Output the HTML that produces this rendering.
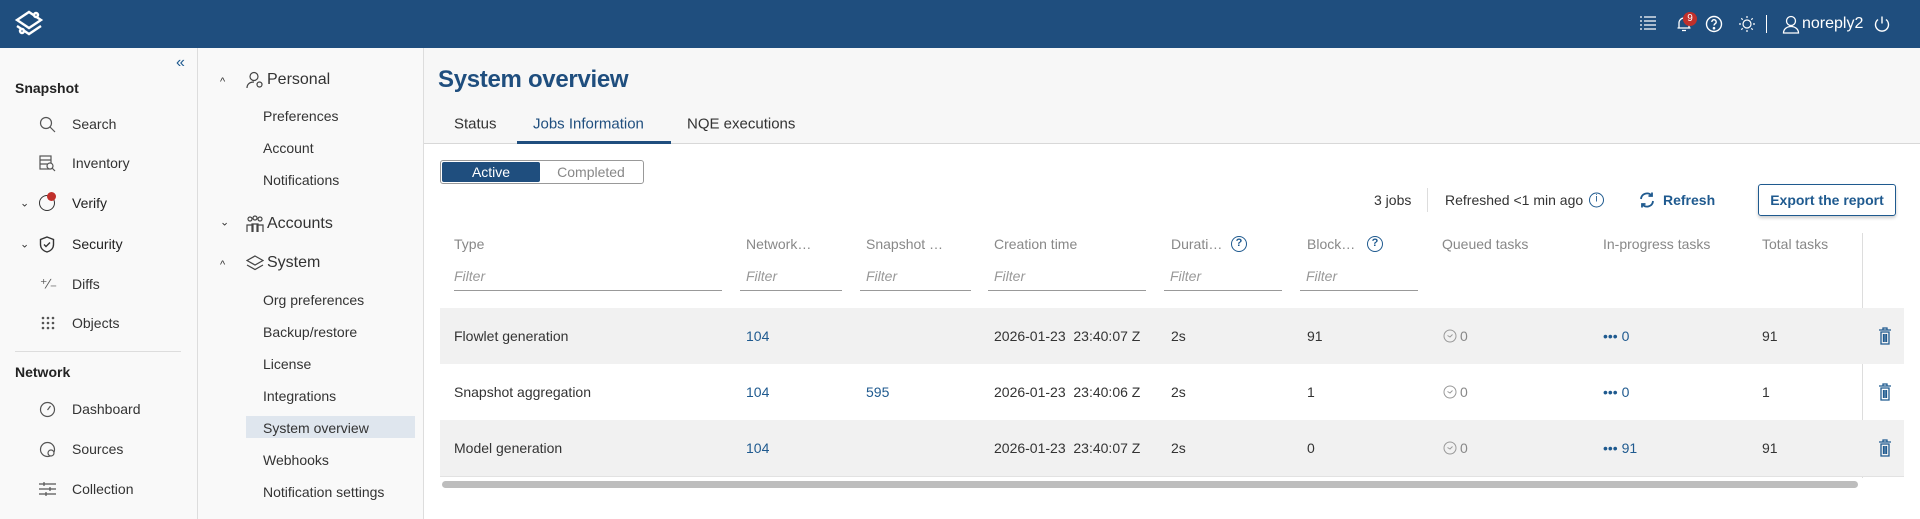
<!DOCTYPE html>
<html><head><meta charset="utf-8"><style>
*{box-sizing:border-box;margin:0;padding:0}
body{width:1920px;height:519px;overflow:hidden;font-family:"Liberation Sans",sans-serif;font-size:14px;color:#333;background:#fff;position:relative}
.a{position:absolute;white-space:nowrap}
.hdr{position:absolute;left:0;top:0;width:1920px;height:48px;background:#1f4e7e}
.sb1{position:absolute;left:0;top:48px;width:198px;height:471px;background:#f9f9f9;border-right:1px solid #ddd}
.sb2{position:absolute;left:198px;top:48px;width:226px;height:471px;background:#f9f9f9;border-right:1px solid #ddd}
.top{position:absolute;left:424px;top:48px;width:1496px;height:96px;background:#f7f7f7;border-bottom:1px solid #d8d8d8}
.t{transform:translateY(-50%)}
.blue{color:#1f5a8f}
.g{color:#888}
svg{position:absolute}
</style></head><body>
<div class="hdr"></div>
<svg style="left:14px;top:9px" width="30" height="30" viewBox="0 0 30 30" fill="none" stroke="#fff" stroke-width="2.4"><path d="M15 3 L27 11 L15 19 L3 11 Z"/><path d="M3 17 L15 25 L27 17"/><circle cx="22" cy="6" r="2" fill="#1f4e7e"/><circle cx="8" cy="22" r="2" fill="#1f4e7e"/></svg>
<svg style="left:1640px;top:16px" width="16" height="14" viewBox="0 0 16 14" fill="none" stroke="#fff" stroke-width="1.3"><path d="M0 1h2M0 5h2M0 9h2M0 13h2M4 1h12M4 5h12M4 9h12M4 13h12"/></svg>
<svg style="left:1675px;top:15px" width="18" height="18" viewBox="0 0 18 18" fill="none" stroke="#fff" stroke-width="1.3"><path d="M4 13V8a5 5 0 0110 0v5H2.5h13M7 15.5h4"/></svg>
<div class="a" style="left:1683px;top:12px;width:14px;height:14px;border-radius:7px;background:#c0302b;color:#fff;font-size:10px;text-align:center;line-height:14px">9</div>
<svg style="left:1705px;top:15px" width="18" height="18" viewBox="0 0 18 18" fill="none" stroke="#fff" stroke-width="1.4"><circle cx="9" cy="9" r="7.5"/><path d="M6.8 7a2.2 2.2 0 114 1.2c-.8.6-1.8 1-1.8 2.3"/><circle cx="9" cy="13.2" r=".6" fill="#fff"/></svg>
<svg style="left:1738px;top:15px" width="18" height="18" viewBox="0 0 18 18" fill="none" stroke="#fff" stroke-width="1.2"><circle cx="9" cy="9" r="4"/><path d="M9 1v2M9 15v2M1 9h2M15 9h2M3.3 3.3l1.4 1.4M13.3 13.3l1.4 1.4M3.3 14.7l1.4-1.4M13.3 4.7l1.4-1.4"/></svg>
<div class="a" style="left:1766px;top:15px;width:1px;height:18px;background:#fff"></div>
<svg style="left:1782px;top:14px" width="18" height="20" viewBox="0 0 18 20" fill="none" stroke="#fff" stroke-width="1.3"><circle cx="9" cy="7" r="4.5"/><path d="M1.5 19c0-4 3.5-6.5 7.5-6.5s7.5 2.5 7.5 6.5z"/></svg>
<div class="a" style="left:1802px;top:15px;color:#fff;font-size:16px">noreply2</div>
<svg style="left:1873px;top:15px" width="18" height="18" viewBox="0 0 18 18" fill="none" stroke="#fff" stroke-width="1.4"><path d="M5 4.5a6.5 6.5 0 108 0M9 1.5v7"/></svg>

<div class="sb1"></div>
<div class="a" style="left:176px;top:54px;color:#1f5a8f;font-size:16px">«</div>
<div class="a t" style="left:15px;top:88px;font-weight:bold;color:#222">Snapshot</div>
<svg style="left:39px;top:116px" width="17" height="17" viewBox="0 0 17 17" fill="none" stroke="#555" stroke-width="1.2"><circle cx="7" cy="7" r="5.5"/><path d="M11 11l5 5"/></svg>
<div class="a t" style="left:72px;top:124px">Search</div>
<svg style="left:39px;top:155px" width="17" height="17" viewBox="0 0 17 17" fill="none" stroke="#555" stroke-width="1.2"><rect x="1" y="1" width="11" height="13"/><path d="M1 5h11M1 9h11"/><circle cx="11" cy="11" r="3" fill="#f9f9f9"/><path d="M13 13l3 3"/></svg>
<div class="a t" style="left:72px;top:163px">Inventory</div>
<div class="a t" style="left:20px;top:203px;font-size:11px">⌄</div>
<div class="a t" style="left:39px;top:203px;width:16px;height:16px;border:1.5px solid #333;border-radius:8px"></div>
<div class="a" style="left:47px;top:192px;width:9px;height:9px;border-radius:5px;background:#c0302b"></div>
<div class="a t" style="left:72px;top:203px;color:#222">Verify</div>
<div class="a t" style="left:20px;top:244px;font-size:11px">⌄</div>
<svg style="left:39px;top:236px" width="16" height="17" viewBox="0 0 16 17" fill="none" stroke="#333" stroke-width="1.4"><path d="M8 1l6.5 2.5v5c0 4-3 6.5-6.5 7.5C4.5 15 1.5 12.5 1.5 8.5v-5z"/><path d="M5 8.5l2 2 4-4"/></svg>
<div class="a t" style="left:72px;top:244px;color:#222">Security</div>
<div class="a t" style="left:40px;top:284px;color:#555">⁺∕₋</div>
<div class="a t" style="left:72px;top:284px">Diffs</div>
<svg style="left:41px;top:316px" width="14" height="14" viewBox="0 0 14 14" fill="#555"><circle cx="2" cy="2" r="1.3"/><circle cx="7" cy="2" r="1.3"/><circle cx="12" cy="2" r="1.3"/><circle cx="2" cy="7" r="1.3"/><circle cx="7" cy="7" r="1.3"/><circle cx="12" cy="7" r="1.3"/><circle cx="2" cy="12" r="1.3"/><circle cx="7" cy="12" r="1.3"/><circle cx="12" cy="12" r="1.3"/></svg>
<div class="a t" style="left:72px;top:323px">Objects</div>
<div class="a" style="left:15px;top:351px;width:166px;height:1px;background:#ddd"></div>
<div class="a t" style="left:15px;top:372px;font-weight:bold;color:#222">Network</div>
<svg style="left:39px;top:401px" width="17" height="17" viewBox="0 0 17 17" fill="none" stroke="#555" stroke-width="1.2"><circle cx="8.5" cy="8.5" r="7"/><path d="M8.5 9l3-4"/></svg>
<div class="a t" style="left:72px;top:409px">Dashboard</div>
<svg style="left:39px;top:441px" width="17" height="17" viewBox="0 0 17 17" fill="none" stroke="#555" stroke-width="1.2"><circle cx="8.5" cy="8.5" r="7"/><circle cx="12" cy="12" r="3" fill="#f9f9f9"/></svg>
<div class="a t" style="left:72px;top:449px">Sources</div>
<svg style="left:39px;top:482px" width="17" height="14" viewBox="0 0 17 14" fill="none" stroke="#555" stroke-width="1.2"><path d="M0 2h17M0 7h17M0 12h17"/><path d="M5 0v4M11 5v4M7 10v4"/></svg>
<div class="a t" style="left:72px;top:489px">Collection</div>

<div class="sb2"></div>
<div class="a t" style="left:220px;top:82px;font-size:11px">^</div>
<svg style="left:246px;top:71px" width="18" height="18" viewBox="0 0 18 18" fill="none" stroke="#444" stroke-width="1.2"><circle cx="8" cy="5.5" r="4"/><path d="M1 17c0-4 3-6 7-6"/><circle cx="13.5" cy="13.5" r="2.5"/></svg>
<div class="a t" style="left:267px;top:80px;font-size:16px;color:#333">Personal</div>
<div class="a t" style="left:263px;top:116px">Preferences</div>
<div class="a t" style="left:263px;top:148px">Account</div>
<div class="a t" style="left:263px;top:180px">Notifications</div>
<div class="a t" style="left:220px;top:222px;font-size:11px">⌄</div>
<svg style="left:246px;top:215px" width="18" height="18" viewBox="0 0 18 18" fill="none" stroke="#444" stroke-width="1.2"><circle cx="4" cy="4" r="2"/><circle cx="9" cy="3" r="2"/><circle cx="14" cy="4" r="2"/><path d="M1 17v-7h6v7M6 17v-8h6v8M11 17v-7h6v7"/></svg>
<div class="a t" style="left:267px;top:224px;font-size:16px">Accounts</div>
<div class="a t" style="left:220px;top:265px;font-size:11px">^</div>
<svg style="left:246px;top:255px" width="18" height="16" viewBox="0 0 18 16" fill="none" stroke="#444" stroke-width="1.2"><path d="M9 1l8 4.5-8 4.5-8-4.5z"/><path d="M1 10l8 4.5 8-4.5"/></svg>
<div class="a t" style="left:267px;top:263px;font-size:16px">System</div>
<div class="a t" style="left:263px;top:300px">Org preferences</div>
<div class="a t" style="left:263px;top:332px">Backup/restore</div>
<div class="a t" style="left:263px;top:364px">License</div>
<div class="a t" style="left:263px;top:396px">Integrations</div>
<div class="a" style="left:246px;top:416px;width:169px;height:22px;background:#dfe6ee"></div>
<div class="a t" style="left:263px;top:428px">System overview</div>
<div class="a t" style="left:263px;top:460px">Webhooks</div>
<div class="a t" style="left:263px;top:492px">Notification settings</div>

<div class="top"></div>
<div class="a t" style="left:438px;top:80px;font-size:24px;color:#1f4e7e;font-weight:bold;letter-spacing:-0.3px">System overview</div>
<div class="a t" style="left:454px;top:124px;font-size:15px">Status</div>
<div class="a t" style="left:533px;top:124px;font-size:15px;color:#1f4e7e">Jobs Information</div>
<div class="a t" style="left:687px;top:124px;font-size:15px">NQE executions</div>
<div class="a" style="left:517px;top:141px;width:154px;height:3px;background:#1f4e7e"></div>

<div class="a" style="left:440px;top:160px;width:204px;height:24px;border:1px solid #999;border-radius:3px"></div>
<div class="a" style="left:442px;top:162px;width:98px;height:20px;background:#1f4e7e;border-radius:2px;color:#fff;text-align:center;line-height:20px">Active</div>
<div class="a" style="left:540px;top:162px;width:102px;height:20px;color:#888;text-align:center;line-height:20px">Completed</div>

<div class="a t" style="left:1374px;top:200px">3 jobs</div>
<div class="a" style="left:1427px;top:188px;width:1px;height:24px;background:#ddd"></div>
<div class="a t" style="left:1445px;top:200px">Refreshed &lt;1 min ago</div>
<div class="a t" style="left:1589px;top:200px;width:15px;height:15px;border:1.3px solid #1f5a8f;border-radius:8px;color:#1f5a8f;font-size:10px;text-align:center;line-height:12px">i</div>
<svg style="left:1638px;top:191px" width="18" height="18" viewBox="0 0 18 18" fill="none" stroke="#1f5a8f" stroke-width="1.8"><path d="M3 8a6 6 0 0110.5-3.5M15 10a6 6 0 01-10.5 3.5"/><path d="M14 1.5v3.5h-3.5M4 16.5V13h3.5"/></svg>
<div class="a t" style="left:1663px;top:200px;color:#1f5a8f;font-weight:bold">Refresh</div>
<div class="a" style="left:1758px;top:184px;width:138px;height:32px;border:1px solid #1f5a8f;border-radius:3px;box-shadow:0 2px 3px rgba(0,0,0,.2);color:#1f5a8f;font-weight:bold;text-align:center;line-height:30px">Export the report</div>

<div class="a g t" style="left:454px;top:244px">Type</div>
<div class="a g t" style="left:746px;top:244px">Network…</div>
<div class="a g t" style="left:866px;top:244px">Snapshot …</div>
<div class="a g t" style="left:994px;top:244px">Creation time</div>
<div class="a g t" style="left:1171px;top:244px">Durati…</div>
<div class="a t" style="left:1231px;top:244px;width:16px;height:16px;border:1.4px solid #1f5a8f;border-radius:8px;color:#1f5a8f;font-size:11px;text-align:center;line-height:13px;font-weight:bold">?</div>
<div class="a g t" style="left:1307px;top:244px">Block…</div>
<div class="a t" style="left:1367px;top:244px;width:16px;height:16px;border:1.4px solid #1f5a8f;border-radius:8px;color:#1f5a8f;font-size:11px;text-align:center;line-height:13px;font-weight:bold">?</div>
<div class="a g t" style="left:1442px;top:244px">Queued tasks</div>
<div class="a g t" style="left:1603px;top:244px">In-progress tasks</div>
<div class="a g t" style="left:1762px;top:244px">Total tasks</div>
<div class="a" style="left:1862px;top:233px;width:1px;height:245px;background:#ddd"></div>

<div class="a" style="left:454px;top:266px;width:268px;height:25px;border-bottom:1px solid #999;color:#999;font-style:italic;line-height:20px">Filter</div>
<div class="a" style="left:740px;top:266px;width:102px;height:25px;border-bottom:1px solid #999;color:#999;font-style:italic;line-height:20px;padding-left:6px">Filter</div>
<div class="a" style="left:860px;top:266px;width:111px;height:25px;border-bottom:1px solid #999;color:#999;font-style:italic;line-height:20px;padding-left:6px">Filter</div>
<div class="a" style="left:988px;top:266px;width:158px;height:25px;border-bottom:1px solid #999;color:#999;font-style:italic;line-height:20px;padding-left:6px">Filter</div>
<div class="a" style="left:1164px;top:266px;width:118px;height:25px;border-bottom:1px solid #999;color:#999;font-style:italic;line-height:20px;padding-left:6px">Filter</div>
<div class="a" style="left:1300px;top:266px;width:118px;height:25px;border-bottom:1px solid #999;color:#999;font-style:italic;line-height:20px;padding-left:6px">Filter</div>

<div class="a" style="left:440px;top:308px;width:1464px;height:56px;background:#f1f1f1"></div>
<div class="a" style="left:440px;top:420px;width:1464px;height:56px;background:#f1f1f1"></div>
<div class="a" style="left:440px;top:476px;width:1464px;height:1px;background:#e2e2e2"></div>
<div class="a" style="left:442px;top:481px;width:1416px;height:7px;background:#bdbdbd;border-radius:4px"></div>

<div class="a t" style="left:454px;top:336px">Flowlet generation</div>
<div class="a t blue" style="left:746px;top:336px">104</div>
<div class="a t" style="left:994px;top:336px">2026-01-23&nbsp;&nbsp;23:40:07 Z</div>
<div class="a t" style="left:1171px;top:336px">2s</div>
<div class="a t" style="left:1307px;top:336px">91</div>
<div class="a t g" style="left:1460px;top:336px">0</div>
<div class="a t blue" style="left:1603px;top:336px">••• 0</div>
<div class="a t" style="left:1762px;top:336px">91</div>

<div class="a t" style="left:454px;top:392px">Snapshot aggregation</div>
<div class="a t blue" style="left:746px;top:392px">104</div>
<div class="a t blue" style="left:866px;top:392px">595</div>
<div class="a t" style="left:994px;top:392px">2026-01-23&nbsp;&nbsp;23:40:06 Z</div>
<div class="a t" style="left:1171px;top:392px">2s</div>
<div class="a t" style="left:1307px;top:392px">1</div>
<div class="a t g" style="left:1460px;top:392px">0</div>
<div class="a t blue" style="left:1603px;top:392px">••• 0</div>
<div class="a t" style="left:1762px;top:392px">1</div>

<div class="a t" style="left:454px;top:448px">Model generation</div>
<div class="a t blue" style="left:746px;top:448px">104</div>
<div class="a t" style="left:994px;top:448px">2026-01-23&nbsp;&nbsp;23:40:07 Z</div>
<div class="a t" style="left:1171px;top:448px">2s</div>
<div class="a t" style="left:1307px;top:448px">0</div>
<div class="a t g" style="left:1460px;top:448px">0</div>
<div class="a t blue" style="left:1603px;top:448px">••• 91</div>
<div class="a t" style="left:1762px;top:448px">91</div>

<svg style="left:1443px;top:329px" width="14" height="14" viewBox="0 0 14 14" fill="none" stroke="#999" stroke-width="1"><circle cx="7" cy="7" r="6"/><path d="M4.5 6.5l2.5 1.5 2.5-2.5"/></svg>
<svg style="left:1443px;top:385px" width="14" height="14" viewBox="0 0 14 14" fill="none" stroke="#999" stroke-width="1"><circle cx="7" cy="7" r="6"/><path d="M4.5 6.5l2.5 1.5 2.5-2.5"/></svg>
<svg style="left:1443px;top:441px" width="14" height="14" viewBox="0 0 14 14" fill="none" stroke="#999" stroke-width="1"><circle cx="7" cy="7" r="6"/><path d="M4.5 6.5l2.5 1.5 2.5-2.5"/></svg>
<svg style="left:1879px;top:327px" width="12" height="18" viewBox="0 0 12 18" fill="none" stroke="#1f5a8f" stroke-width="1.3"><path d="M0 3h12M4 3V1h4v2M2 5h8v12H2zM4.5 7v8M6 7v8M7.5 7v8"/></svg>
<svg style="left:1879px;top:383px" width="12" height="18" viewBox="0 0 12 18" fill="none" stroke="#1f5a8f" stroke-width="1.3"><path d="M0 3h12M4 3V1h4v2M2 5h8v12H2zM4.5 7v8M6 7v8M7.5 7v8"/></svg>
<svg style="left:1879px;top:439px" width="12" height="18" viewBox="0 0 12 18" fill="none" stroke="#1f5a8f" stroke-width="1.3"><path d="M0 3h12M4 3V1h4v2M2 5h8v12H2zM4.5 7v8M6 7v8M7.5 7v8"/></svg>
</body></html>
